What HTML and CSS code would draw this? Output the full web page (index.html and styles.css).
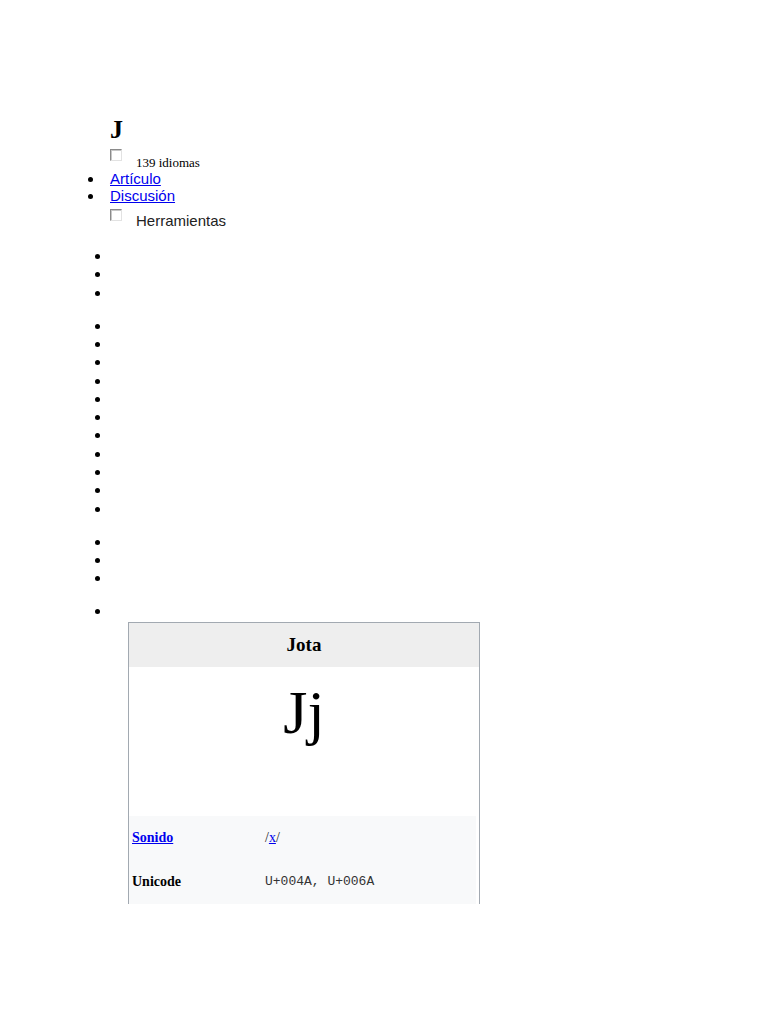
FILE: index.html
```html
<!DOCTYPE html>
<html lang="es">
<head>
<meta charset="utf-8">
<title>J</title>
<link rel="stylesheet" href="styles.css">
</head>
<body>
<header class="page-head">
  <h1 class="title">J</h1>
  <div class="toggle-row lang-row">
    <span class="check"></span>
    <span class="lang-label">139 idiomas</span>
  </div>
  <ul class="views">
    <li><a href="#">Artículo</a></li>
    <li><a href="#">Discusión</a></li>
  </ul>
  <div class="toggle-row tools-row">
    <span class="check"></span>
    <span class="tools-label">Herramientas</span>
  </div>
</header>
<main class="content">
  <ul class="menu-list">
    <li></li><li></li><li></li>
  </ul>
  <ul class="menu-list">
    <li></li><li></li><li></li><li></li><li></li><li></li><li></li><li></li><li></li><li></li><li></li>
  </ul>
  <ul class="menu-list">
    <li></li><li></li><li></li>
  </ul>
  <ul class="menu-list">
    <li>
      <span class="line-lead"></span>
      <div class="infobox">
        <div class="infobox-title">Jota</div>
        <div class="infobox-image">Jj</div>
        <div class="infobox-row">
          <div class="infobox-label"><a href="#">Sonido</a></div>
          <div class="infobox-value">/<a href="#">x</a>/</div>
        </div>
        <div class="infobox-row">
          <div class="infobox-label">Unicode</div>
          <div class="infobox-value mono">U+004A, U+006A</div>
        </div>
      </div>
    </li>
  </ul>
</main>
</body>
</html>
```
FILE: styles.css
```css
html, body {
  margin: 0;
  padding: 0;
  background: #ffffff;
  color: #000000;
  font-family: "Liberation Serif", "Times New Roman", serif;
}

a {
  color: #0000ee;
}

.page-head {
  padding-left: 110px;
}

.title {
  margin: 115px 0 0 0;
  font-size: 26px;
  line-height: 30px;
  font-weight: bold;
}

.toggle-row {
  display: flex;
  align-items: flex-start;
}

.check {
  flex: none;
  box-sizing: border-box;
  width: 12px;
  height: 12px;
  border: 1px solid;
  border-color: #8a8a8a #e2e2e2 #e2e2e2 #8a8a8a;
  background: #fff;
  box-shadow: inset 1px 1px 0 #c8c8c8;
}

.lang-row {
  margin-top: 4px;
  height: 21px;
}

.lang-label {
  margin: 6px 0 0 14px;
  font-size: 13px;
  line-height: 15px;
}

.views {
  margin: 0 0 0 -6px;
  padding: 0;
  font-family: "Liberation Sans", Arial, sans-serif;
  font-size: 15px;
}

.views a {
  margin-left: 6px;
}

.tools-row {
  margin-top: 5px;
  height: 20px;
}

.tools-label {
  margin: 3px 0 0 14px;
  font-family: "Liberation Sans", Arial, sans-serif;
  font-size: 15px;
  line-height: 17px;
  color: #222;
}

.content {
  padding-top: 18px;
}

.menu-list {
  margin: 0 0 14.8px 0;
  padding-left: 111px;
  font-size: 16px;
}

.menu-list li {
  min-height: 18.3px;
  line-height: 18.3px;
}

.line-lead {
  display: inline-block;
  width: 0;
  height: 0;
}

.infobox {
  margin: 1px 0 0 17px;
  width: 352px;
  box-sizing: border-box;
  border: 1px solid #a2a9b1;
  border-bottom: none;
  line-height: normal;
}

.infobox-title {
  height: 44px;
  display: flex;
  align-items: center;
  justify-content: center;
  background: #eeeeee;
  font-size: 19px;
  line-height: 22px;
  font-weight: bold;
}

.infobox-image {
  height: 149px;
  box-sizing: border-box;
  padding-top: 10px;
  text-align: center;
  font-size: 62px;
  line-height: 70px;
}

.infobox-row {
  height: 44px;
  margin-right: 3px;
  display: flex;
  align-items: center;
  background: #f8f9fa;
  font-size: 14px;
  line-height: 16px;
}

.infobox-label {
  width: 133px;
  padding-left: 3px;
  font-weight: bold;
}

.infobox-value {
  color: #222;
}

.mono {
  font-family: "Liberation Mono", "Courier New", monospace;
  font-size: 13px;
  color: #333;
}
```
